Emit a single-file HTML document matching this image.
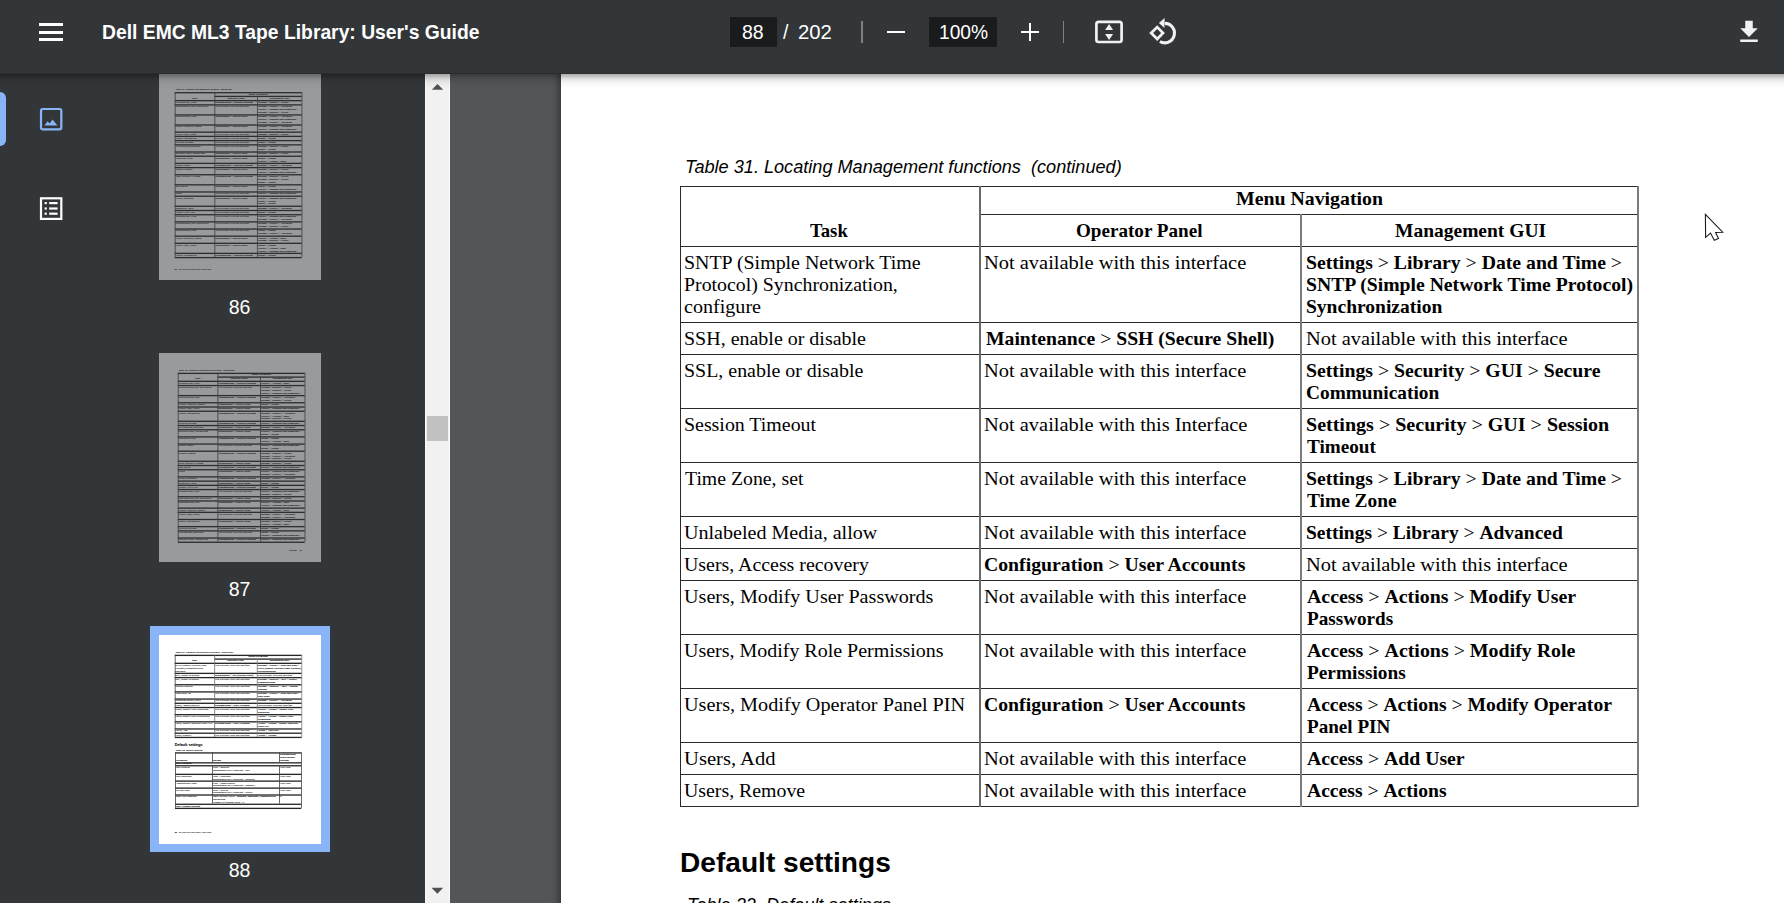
<!DOCTYPE html>
<html><head><meta charset="utf-8">
<style>
html,body{margin:0;padding:0;}
body{width:1784px;height:903px;overflow:hidden;position:relative;background:#525659;}
.t{position:absolute;white-space:nowrap;transform-origin:0 0;color:#000;line-height:normal;}
.hl{position:absolute;height:1px;background:#2a2a2a;}
.vl{position:absolute;width:1px;background:#2a2a2a;}
#toolbar{position:absolute;left:0;top:0;width:1784px;height:74px;background:#323639;z-index:10;}
#tbshadow{position:absolute;left:0;top:74px;width:1784px;height:17px;z-index:9;background:linear-gradient(to bottom, rgba(0,0,0,0.31) 0px, rgba(0,0,0,0.29) 1px, rgba(0,0,0,0.2) 3px, rgba(0,0,0,0.11) 5px, rgba(0,0,0,0.05) 8px, rgba(0,0,0,0.016) 12px, rgba(0,0,0,0) 16px);}
.th .hl{height:10px !important;background:#262626;}
.th .vl{width:6px !important;background:#404040;}
.th .t{-webkit-text-stroke:0.5px #333;}
#sidebar{position:absolute;left:0;top:74px;width:425px;height:829px;background:#323639;overflow:hidden;}
#scroll{position:absolute;left:425px;top:74px;width:25px;height:829px;background:#f1f1f1;}
#page{position:absolute;left:561px;top:37px;width:1224px;height:1584px;background:#fff;box-shadow:-3px 0 6px rgba(0,0,0,0.35);}
.tb{position:absolute;color:#fff;font-family:'Liberation Sans', sans-serif;white-space:nowrap;}
</style></head><body>
<div id="page">
<div class="t" style="left:123.93px;top:119.86px;font:17.5px 'Liberation Sans', sans-serif;transform:scaleX(1.0358);font-style:italic;">Table 31. Locating Management functions  (continued)</div>
<div class='hl' style='left:118.5px;top:148.5px;width:959.0px'></div>
<div class='hl' style='left:418.5px;top:176.5px;width:659.0px'></div>
<div class='hl' style='left:118.5px;top:208.5px;width:959.0px'></div>
<div class='hl' style='left:118.5px;top:284.5px;width:959.0px'></div>
<div class='hl' style='left:118.5px;top:316.5px;width:959.0px'></div>
<div class='hl' style='left:118.5px;top:370.5px;width:959.0px'></div>
<div class='hl' style='left:118.5px;top:424.5px;width:959.0px'></div>
<div class='hl' style='left:118.5px;top:478.5px;width:959.0px'></div>
<div class='hl' style='left:118.5px;top:510.5px;width:959.0px'></div>
<div class='hl' style='left:118.5px;top:542.5px;width:959.0px'></div>
<div class='hl' style='left:118.5px;top:596.5px;width:959.0px'></div>
<div class='hl' style='left:118.5px;top:650.5px;width:959.0px'></div>
<div class='hl' style='left:118.5px;top:704.5px;width:959.0px'></div>
<div class='hl' style='left:118.5px;top:736.5px;width:959.0px'></div>
<div class='hl' style='left:118.5px;top:768.5px;width:959.0px'></div>
<div class='vl' style='left:118.5px;top:148.5px;height:621.0px'></div>
<div class='vl' style='left:1076px;top:148.5px;height:621.0px;width:2px;background:#7c7c7c'></div>
<div class='vl' style='left:418px;top:148.5px;height:621.0px;width:2px;background:#6a6a6a'></div>
<div class='vl' style='left:739px;top:176.5px;height:593.0px;width:2px;background:#7c7c7c'></div>
<div class="t" style="left:675.18px;top:151.27px;font:19px 'Liberation Serif', serif;transform:scaleX(1.0429);"><b>Menu Navigation</b></div>
<div class="t" style="left:249.21px;top:182.87px;font:19px 'Liberation Serif', serif;transform:scaleX(0.9842);"><b>Task</b></div>
<div class="t" style="left:515.39px;top:182.87px;font:19px 'Liberation Serif', serif;transform:scaleX(1.0056);"><b>Operator Panel</b></div>
<div class="t" style="left:833.99px;top:182.87px;font:19px 'Liberation Serif', serif;transform:scaleX(1.0260);"><b>Management GUI</b></div>
<div class="t" style="left:122.95px;top:214.67px;font:19px 'Liberation Serif', serif;transform:scaleX(1.0478);">SNTP (Simple Network Time</div>
<div class="t" style="left:122.96px;top:236.67px;font:19px 'Liberation Serif', serif;transform:scaleX(1.0443);">Protocol) Synchronization,</div>
<div class="t" style="left:122.94px;top:258.67px;font:19px 'Liberation Serif', serif;transform:scaleX(1.0577);">configure</div>
<div class="t" style="left:423.42px;top:214.67px;font:19px 'Liberation Serif', serif;transform:scaleX(1.0760);">Not available with this interface</div>
<div class="t" style="left:745.36px;top:214.67px;font:19px 'Liberation Serif', serif;transform:scaleX(1.0381);"><b>Settings</b> &gt; <b>Library</b> &gt; <b>Date and Time</b> &gt;</div>
<div class="t" style="left:745.36px;top:236.67px;font:19px 'Liberation Serif', serif;transform:scaleX(1.0363);"><b>SNTP (Simple Network Time Protocol)</b></div>
<div class="t" style="left:745.37px;top:258.67px;font:19px 'Liberation Serif', serif;transform:scaleX(1.0275);"><b>Synchronization</b></div>
<div class="t" style="left:122.95px;top:290.67px;font:19px 'Liberation Serif', serif;transform:scaleX(1.0512);">SSH, enable or disable</div>
<div class="t" style="left:424.50px;top:290.67px;font:19px 'Liberation Serif', serif;transform:scaleX(1.0353);"><b>Maintenance</b> &gt; <b>SSH (Secure Shell)</b></div>
<div class="t" style="left:745.33px;top:290.67px;font:19px 'Liberation Serif', serif;transform:scaleX(1.0727);">Not available with this interface</div>
<div class="t" style="left:122.95px;top:322.67px;font:19px 'Liberation Serif', serif;transform:scaleX(1.0485);">SSL, enable or disable</div>
<div class="t" style="left:423.42px;top:322.67px;font:19px 'Liberation Serif', serif;transform:scaleX(1.0760);">Not available with this interface</div>
<div class="t" style="left:745.36px;top:322.67px;font:19px 'Liberation Serif', serif;transform:scaleX(1.0404);"><b>Settings</b> &gt; <b>Security</b> &gt; <b>GUI</b> &gt; <b>Secure</b></div>
<div class="t" style="left:745.38px;top:344.67px;font:19px 'Liberation Serif', serif;transform:scaleX(1.0178);"><b>Communication</b></div>
<div class="t" style="left:122.95px;top:376.67px;font:19px 'Liberation Serif', serif;transform:scaleX(1.0464);">Session Timeout</div>
<div class="t" style="left:423.42px;top:376.67px;font:19px 'Liberation Serif', serif;transform:scaleX(1.0761);">Not available with this Interface</div>
<div class="t" style="left:745.35px;top:376.67px;font:19px 'Liberation Serif', serif;transform:scaleX(1.0542);"><b>Settings</b> &gt; <b>Security</b> &gt; <b>GUI</b> &gt; <b>Session</b></div>
<div class="t" style="left:746.40px;top:398.67px;font:19px 'Liberation Serif', serif;transform:scaleX(1.0074);"><b>Timeout</b></div>
<div class="t" style="left:124.00px;top:430.67px;font:19px 'Liberation Serif', serif;transform:scaleX(1.0404);">Time Zone, set</div>
<div class="t" style="left:423.42px;top:430.67px;font:19px 'Liberation Serif', serif;transform:scaleX(1.0760);">Not available with this interface</div>
<div class="t" style="left:745.36px;top:430.67px;font:19px 'Liberation Serif', serif;transform:scaleX(1.0381);"><b>Settings</b> &gt; <b>Library</b> &gt; <b>Date and Time</b> &gt;</div>
<div class="t" style="left:746.40px;top:452.67px;font:19px 'Liberation Serif', serif;transform:scaleX(1.0207);"><b>Time Zone</b></div>
<div class="t" style="left:122.94px;top:484.67px;font:19px 'Liberation Serif', serif;transform:scaleX(1.0555);">Unlabeled Media, allow</div>
<div class="t" style="left:423.42px;top:484.67px;font:19px 'Liberation Serif', serif;transform:scaleX(1.0760);">Not available with this interface</div>
<div class="t" style="left:745.38px;top:484.67px;font:19px 'Liberation Serif', serif;transform:scaleX(1.0249);"><b>Settings</b> &gt; <b>Library</b> &gt; <b>Advanced</b></div>
<div class="t" style="left:122.95px;top:516.67px;font:19px 'Liberation Serif', serif;transform:scaleX(1.0457);">Users, Access recovery</div>
<div class="t" style="left:423.46px;top:516.67px;font:19px 'Liberation Serif', serif;transform:scaleX(1.0388);"><b>Configuration</b> &gt; <b>User Accounts</b></div>
<div class="t" style="left:745.33px;top:516.67px;font:19px 'Liberation Serif', serif;transform:scaleX(1.0731);">Not available with this interface</div>
<div class="t" style="left:122.94px;top:548.67px;font:19px 'Liberation Serif', serif;transform:scaleX(1.0598);">Users, Modify User Passwords</div>
<div class="t" style="left:423.42px;top:548.67px;font:19px 'Liberation Serif', serif;transform:scaleX(1.0760);">Not available with this interface</div>
<div class="t" style="left:746.40px;top:548.67px;font:19px 'Liberation Serif', serif;transform:scaleX(1.0455);"><b>Access</b> &gt; <b>Actions</b> &gt; <b>Modify User</b></div>
<div class="t" style="left:746.40px;top:570.67px;font:19px 'Liberation Serif', serif;transform:scaleX(1.0082);"><b>Passwords</b></div>
<div class="t" style="left:122.95px;top:602.67px;font:19px 'Liberation Serif', serif;transform:scaleX(1.0510);">Users, Modify Role Permissions</div>
<div class="t" style="left:423.42px;top:602.67px;font:19px 'Liberation Serif', serif;transform:scaleX(1.0760);">Not available with this interface</div>
<div class="t" style="left:746.40px;top:602.67px;font:19px 'Liberation Serif', serif;transform:scaleX(1.0473);"><b>Access</b> &gt; <b>Actions</b> &gt; <b>Modify Role</b></div>
<div class="t" style="left:746.40px;top:624.67px;font:19px 'Liberation Serif', serif;transform:scaleX(1.0165);"><b>Permissions</b></div>
<div class="t" style="left:122.94px;top:656.67px;font:19px 'Liberation Serif', serif;transform:scaleX(1.0635);">Users, Modify Operator Panel PIN</div>
<div class="t" style="left:423.46px;top:656.67px;font:19px 'Liberation Serif', serif;transform:scaleX(1.0388);"><b>Configuration</b> &gt; <b>User Accounts</b></div>
<div class="t" style="left:746.40px;top:656.67px;font:19px 'Liberation Serif', serif;transform:scaleX(1.0325);"><b>Access</b> &gt; <b>Actions</b> &gt; <b>Modify Operator</b></div>
<div class="t" style="left:746.40px;top:678.67px;font:19px 'Liberation Serif', serif;transform:scaleX(1.0060);"><b>Panel PIN</b></div>
<div class="t" style="left:122.92px;top:710.67px;font:19px 'Liberation Serif', serif;transform:scaleX(1.0843);">Users, Add</div>
<div class="t" style="left:423.42px;top:710.67px;font:19px 'Liberation Serif', serif;transform:scaleX(1.0760);">Not available with this interface</div>
<div class="t" style="left:746.40px;top:710.67px;font:19px 'Liberation Serif', serif;transform:scaleX(1.0397);"><b>Access</b> &gt; <b>Add User</b></div>
<div class="t" style="left:122.96px;top:742.67px;font:19px 'Liberation Serif', serif;transform:scaleX(1.0435);">Users, Remove</div>
<div class="t" style="left:423.42px;top:742.67px;font:19px 'Liberation Serif', serif;transform:scaleX(1.0760);">Not available with this interface</div>
<div class="t" style="left:746.40px;top:742.67px;font:19px 'Liberation Serif', serif;transform:scaleX(1.0319);"><b>Access</b> &gt; <b>Actions</b></div>
<div class="t" style="left:118.56px;top:810.41px;font:bold 27.5px 'Liberation Sans', sans-serif;transform:scaleX(1.0221);">Default settings</div>
<div class="t" style="left:126.00px;top:857.66px;font:17.5px 'Liberation Sans', sans-serif;transform:scaleX(1.0360);font-style:italic;">Table 32. Default settings</div>
<div class='hl' style='left:121px;top:886px;width:954px'></div>
<div class='hl' style='left:121px;top:961px;width:954px'></div>
<div class='hl' style='left:121px;top:983px;width:954px'></div>
<div class='hl' style='left:121px;top:1048px;width:954px'></div>
<div class='hl' style='left:121px;top:1099px;width:954px'></div>
<div class='hl' style='left:121px;top:1152px;width:954px'></div>
<div class='hl' style='left:121px;top:1204px;width:954px'></div>
<div class='hl' style='left:121px;top:1274px;width:954px'></div>
<div class='hl' style='left:121px;top:1305px;width:954px'></div>
<div class='vl' style='left:121px;top:886px;height:420px'></div>
<div class='vl' style='left:1074px;top:886px;height:420px'></div>
<div class='vl' style='left:402px;top:886px;height:75px'></div>
<div class='vl' style='left:402px;top:983px;height:291px'></div>
<div class='vl' style='left:908px;top:886px;height:75px'></div>
<div class='vl' style='left:908px;top:983px;height:291px'></div>
<div class="t" style="left:126.00px;top:936.07px;font:19px 'Liberation Serif', serif;transform:scaleX(1.0300);"><b>Parameter</b></div>
<div class="t" style="left:408.00px;top:936.07px;font:19px 'Liberation Serif', serif;transform:scaleX(1.0300);"><b>Default</b></div>
<div class="t" style="left:914.00px;top:892.07px;font:19px 'Liberation Serif', serif;transform:scaleX(1.0300);"><b>Configuration</b></div>
<div class="t" style="left:914.00px;top:914.07px;font:19px 'Liberation Serif', serif;transform:scaleX(1.0300);"><b>Reset Default</b></div>
<div class="t" style="left:914.00px;top:936.07px;font:19px 'Liberation Serif', serif;transform:scaleX(1.0300);"><b>Settings</b></div>
<div class="t" style="left:126.00px;top:959.07px;font:19px 'Liberation Serif', serif;transform:scaleX(1.0300);"><b>User Accounts</b></div>
<div class="t" style="left:126.00px;top:988.67px;font:19px 'Liberation Serif', serif;transform:scaleX(1.0500);">User Monitor</div>
<div class="t" style="left:408.00px;top:988.67px;font:19px 'Liberation Serif', serif;transform:scaleX(1.0500);">User = monitor</div>
<div class="t" style="left:408.00px;top:1010.67px;font:19px 'Liberation Serif', serif;transform:scaleX(1.0500);">Management GUI Password = null</div>
<div class="t" style="left:914.00px;top:988.67px;font:19px 'Liberation Serif', serif;transform:scaleX(1.0500);">NOT reset</div>
<div class="t" style="left:126.00px;top:1053.67px;font:19px 'Liberation Serif', serif;transform:scaleX(1.0500);">User Superuser</div>
<div class="t" style="left:408.00px;top:1053.67px;font:19px 'Liberation Serif', serif;transform:scaleX(1.0500);">User = superuser</div>
<div class="t" style="left:408.00px;top:1075.67px;font:19px 'Liberation Serif', serif;transform:scaleX(1.0500);">Management GUI Password = surpswd</div>
<div class="t" style="left:914.00px;top:1053.67px;font:19px 'Liberation Serif', serif;transform:scaleX(1.0500);">NOT reset</div>
<div class="t" style="left:126.00px;top:1104.67px;font:19px 'Liberation Serif', serif;transform:scaleX(1.0500);">Administrator login</div>
<div class="t" style="left:408.00px;top:1104.67px;font:19px 'Liberation Serif', serif;transform:scaleX(1.0500);">User = administrator</div>
<div class="t" style="left:408.00px;top:1126.67px;font:19px 'Liberation Serif', serif;transform:scaleX(1.0500);">Management GUI Password = admin01</div>
<div class="t" style="left:914.00px;top:1104.67px;font:19px 'Liberation Serif', serif;transform:scaleX(1.0500);">NOT reset</div>
<div class="t" style="left:126.00px;top:1157.67px;font:19px 'Liberation Serif', serif;transform:scaleX(1.0500);">Service login</div>
<div class="t" style="left:408.00px;top:1157.67px;font:19px 'Liberation Serif', serif;transform:scaleX(1.0500);">User = service</div>
<div class="t" style="left:408.00px;top:1179.67px;font:19px 'Liberation Serif', serif;transform:scaleX(1.0500);">Management GUI Password = ser001</div>
<div class="t" style="left:914.00px;top:1157.67px;font:19px 'Liberation Serif', serif;transform:scaleX(1.0500);">NOT reset</div>
<div class="t" style="left:126.00px;top:1209.67px;font:19px 'Liberation Serif', serif;transform:scaleX(1.0500);">Small user accounts</div>
<div class="t" style="left:408.00px;top:1209.67px;font:19px 'Liberation Serif', serif;transform:scaleX(1.0500);">Small Default Users = <b>monitor</b>, <b>superuser</b>, <b>administrator</b>,</div>
<div class="t" style="left:408.00px;top:1231.67px;font:19px 'Liberation Serif', serif;transform:scaleX(1.0500);">and <b>service</b></div>
<div class="t" style="left:408.00px;top:1253.67px;font:19px 'Liberation Serif', serif;transform:scaleX(1.0500);">Number of Custom Users = 0</div>
<div class="t" style="left:914.00px;top:1209.67px;font:19px 'Liberation Serif', serif;transform:scaleX(1.0500);">0</div>
<div class="t" style="left:126.00px;top:1279.07px;font:19px 'Liberation Serif', serif;transform:scaleX(1.0300);"><b>User Account Settings</b></div>
</div>
<div id="sidebar">
  <div style="position:absolute;left:-6px;top:18px;width:12px;height:54px;border-radius:6px;background:#8ab4f8"></div>
  <svg style="position:absolute;left:35px;top:28px" width="32" height="32" viewBox="35 102 32 32">
    <rect x="41" y="109" width="20.3" height="20.3" rx="1.8" fill="none" stroke="#8ab4f8" stroke-width="2.2"/>
    <path d="M44.5 125.5 L47.6 121.2 L49.6 123.6 L52.6 119.4 L57.4 125.5 Z" fill="#8ab4f8"/>
  </svg>
  <svg style="position:absolute;left:35px;top:118px" width="32" height="32" viewBox="35 192 32 32">
    <rect x="41" y="198.3" width="20.3" height="20.6" fill="none" stroke="#fff" stroke-width="2.2"/>
    <rect x="44.6" y="202" width="2.2" height="2.2" fill="#fff"/>
    <rect x="44.6" y="207.4" width="2.2" height="2.2" fill="#fff"/>
    <rect x="44.6" y="212.6" width="2.2" height="2.2" fill="#fff"/>
    <rect x="49.2" y="202" width="8.4" height="2.2" fill="#fff"/>
    <rect x="49.2" y="207.4" width="8.4" height="2.2" fill="#fff"/>
    <rect x="49.2" y="212.6" width="8.4" height="2.2" fill="#fff"/>
  </svg>
<div class='th' style='position:absolute;left:159px;top:-3px;width:162px;height:209px;overflow:hidden;background:#fff'><div style='position:absolute;left:0;top:0;width:1224px;height:1584px;transform:scale(0.132353);transform-origin:0 0'><div style='position:absolute;left:0;top:10px;width:1224px;height:1584px'><div class="t" style="left:126.00px;top:119.86px;font:17.5px 'Liberation Sans', sans-serif;transform:scaleX(1.0000);font-style:italic;">Table 31. Locating Management functions  (continued)</div>
<div class='hl' style='left:119px;top:149px;width:959px;height:2px'></div>
<div class='hl' style='left:419px;top:177px;width:659px;height:2px'></div>
<div class="t" style="left:676.00px;top:151.07px;font:19px 'Liberation Serif', serif;transform:scaleX(1.0300);"><b>Menu Navigation</b></div>
<div class="t" style="left:250.00px;top:183.07px;font:19px 'Liberation Serif', serif;transform:scaleX(1.0300);"><b>Task</b></div>
<div class="t" style="left:517.00px;top:183.07px;font:19px 'Liberation Serif', serif;transform:scaleX(1.0300);"><b>Operator Panel</b></div>
<div class="t" style="left:835.00px;top:183.07px;font:19px 'Liberation Serif', serif;transform:scaleX(1.0300);"><b>Management GUI</b></div>
<div class='hl' style='left:119px;top:209px;width:959px;height:2px'></div>
<div class="t" style="left:124.00px;top:214.67px;font:19px 'Liberation Serif', serif;transform:scaleX(1.0500);">Cleaning tape, eject</div>
<div class="t" style="left:425.00px;top:214.67px;font:19px 'Liberation Serif', serif;transform:scaleX(1.0300);"><b>Configuration</b> &gt; <b>Network Settings</b></div>
<div class="t" style="left:746.00px;top:214.67px;font:19px 'Liberation Serif', serif;transform:scaleX(1.0300);"><b>Settings</b> &gt; <b>Security</b> &gt; <b>SNMP</b></div>
<div class='hl' style='left:119px;top:241px;width:959px;height:2px'></div>
<div class="t" style="left:124.00px;top:246.67px;font:19px 'Liberation Serif', serif;transform:scaleX(1.0500);">Configuration, save and restore</div>
<div class="t" style="left:425.00px;top:246.67px;font:19px 'Liberation Serif', serif;transform:scaleX(1.0500);">Not available with this interface</div>
<div class="t" style="left:746.00px;top:246.67px;font:19px 'Liberation Serif', serif;transform:scaleX(1.0300);"><b>Settings</b> &gt; <b>Library</b> &gt; <b>Advanced</b></div>
<div class="t" style="left:746.00px;top:268.67px;font:19px 'Liberation Serif', serif;transform:scaleX(1.0300);"><b>Library</b> &gt; <b>Modules and Magazines</b> &gt;</div>
<div class="t" style="left:746.00px;top:290.67px;font:19px 'Liberation Serif', serif;transform:scaleX(1.0300);"><b>Settings</b> &gt; <b>Security</b> &gt; <b>SNMP</b></div>
<div class='hl' style='left:119px;top:317px;width:959px;height:2px'></div>
<div class="t" style="left:124.00px;top:322.67px;font:19px 'Liberation Serif', serif;transform:scaleX(1.0500);">Configuration, reset</div>
<div class="t" style="left:425.00px;top:322.67px;font:19px 'Liberation Serif', serif;transform:scaleX(1.0300);"><b>Maintenance</b> &gt; <b>Library Tests</b></div>
<div class="t" style="left:746.00px;top:322.67px;font:19px 'Liberation Serif', serif;transform:scaleX(1.0300);"><b>Settings</b> &gt; <b>Library</b> &gt; <b>Advanced</b></div>
<div class="t" style="left:746.00px;top:344.67px;font:19px 'Liberation Serif', serif;transform:scaleX(1.0300);"><b>Library</b> &gt; <b>Modules and Magazines</b> &gt;</div>
<div class="t" style="left:746.00px;top:366.67px;font:19px 'Liberation Serif', serif;transform:scaleX(1.0300);"><b>Settings</b> &gt; <b>Library</b> &gt; <b>Advanced</b></div>
<div class='hl' style='left:119px;top:393px;width:959px;height:2px'></div>
<div class="t" style="left:124.00px;top:398.67px;font:19px 'Liberation Serif', serif;transform:scaleX(1.0500);">Library firmware, update</div>
<div class="t" style="left:425.00px;top:398.67px;font:19px 'Liberation Serif', serif;transform:scaleX(1.0300);"><b>Maintenance</b> &gt; <b>Library Tests</b></div>
<div class="t" style="left:746.00px;top:398.67px;font:19px 'Liberation Serif', serif;transform:scaleX(1.0300);"><b>Settings</b> &gt; <b>Library</b> &gt; <b>Advanced</b></div>
<div class="t" style="left:746.00px;top:420.67px;font:19px 'Liberation Serif', serif;transform:scaleX(1.0300);"><b>Library</b> &gt; <b>Modules and Magazines</b> &gt;</div>
<div class='hl' style='left:119px;top:447px;width:959px;height:2px'></div>
<div class="t" style="left:124.00px;top:452.67px;font:19px 'Liberation Serif', serif;transform:scaleX(1.0500);">Library logs, export</div>
<div class="t" style="left:425.00px;top:452.67px;font:19px 'Liberation Serif', serif;transform:scaleX(1.0500);">Not available with this interface</div>
<div class="t" style="left:746.00px;top:452.67px;font:19px 'Liberation Serif', serif;transform:scaleX(1.0300);"><b>Settings</b> &gt; <b>Security</b> &gt; <b>SNMP</b></div>
<div class='hl' style='left:119px;top:479px;width:959px;height:2px'></div>
<div class="t" style="left:124.00px;top:484.67px;font:19px 'Liberation Serif', serif;transform:scaleX(1.0500);">Library Information</div>
<div class="t" style="left:425.00px;top:484.67px;font:19px 'Liberation Serif', serif;transform:scaleX(1.0500);">Not available with this interface</div>
<div class="t" style="left:746.00px;top:484.67px;font:19px 'Liberation Serif', serif;transform:scaleX(1.0300);"><b>Status</b> &gt; <b>Actions</b></div>
<div class='hl' style='left:119px;top:511px;width:959px;height:2px'></div>
<div class="t" style="left:124.00px;top:516.67px;font:19px 'Liberation Serif', serif;transform:scaleX(1.0500);">Network settings</div>
<div class="t" style="left:425.00px;top:516.67px;font:19px 'Liberation Serif', serif;transform:scaleX(1.0500);">Not available with this interface</div>
<div class="t" style="left:746.00px;top:516.67px;font:19px 'Liberation Serif', serif;transform:scaleX(1.0300);"><b>Status</b> &gt; <b>Actions</b></div>
<div class='hl' style='left:119px;top:543px;width:959px;height:2px'></div>
<div class="t" style="left:124.00px;top:548.67px;font:19px 'Liberation Serif', serif;transform:scaleX(1.0500);">Notifications, configure</div>
<div class="t" style="left:425.00px;top:548.67px;font:19px 'Liberation Serif', serif;transform:scaleX(1.0500);">Not available with this interface</div>
<div class="t" style="left:746.00px;top:548.67px;font:19px 'Liberation Serif', serif;transform:scaleX(1.0300);"><b>Settings</b> &gt; <b>Security</b> &gt; <b>SNMP</b></div>
<div class="t" style="left:746.00px;top:570.67px;font:19px 'Liberation Serif', serif;transform:scaleX(1.0300);"><b>Status</b> &gt; <b>Actions</b></div>
<div class='hl' style='left:119px;top:597px;width:959px;height:2px'></div>
<div class="t" style="left:124.00px;top:602.67px;font:19px 'Liberation Serif', serif;transform:scaleX(1.0500);">Operator Panel, unlock/lock</div>
<div class="t" style="left:425.00px;top:602.67px;font:19px 'Liberation Serif', serif;transform:scaleX(1.0300);"><b>Maintenance</b> &gt; <b>Library Tests</b></div>
<div class="t" style="left:746.00px;top:602.67px;font:19px 'Liberation Serif', serif;transform:scaleX(1.0300);"><b>Settings</b> &gt; <b>Security</b> &gt; <b>SNMP</b></div>
<div class='hl' style='left:119px;top:629px;width:959px;height:2px'></div>
<div class="t" style="left:124.00px;top:634.67px;font:19px 'Liberation Serif', serif;transform:scaleX(1.0500);">Password Policy</div>
<div class="t" style="left:425.00px;top:634.67px;font:19px 'Liberation Serif', serif;transform:scaleX(1.0300);"><b>Maintenance</b> &gt; <b>Library Tests</b></div>
<div class="t" style="left:746.00px;top:634.67px;font:19px 'Liberation Serif', serif;transform:scaleX(1.0300);"><b>Status</b> &gt; <b>Actions</b></div>
<div class="t" style="left:746.00px;top:656.67px;font:19px 'Liberation Serif', serif;transform:scaleX(1.0300);"><b>Library</b> &gt; <b>Actions</b> &gt; <b>Tests</b></div>
<div class='hl' style='left:119px;top:683px;width:959px;height:2px'></div>
<div class="t" style="left:124.00px;top:688.67px;font:19px 'Liberation Serif', serif;transform:scaleX(1.0500);">Reboot library</div>
<div class="t" style="left:425.00px;top:688.67px;font:19px 'Liberation Serif', serif;transform:scaleX(1.0300);"><b>Configuration</b> &gt; <b>Network Settings</b></div>
<div class="t" style="left:746.00px;top:688.67px;font:19px 'Liberation Serif', serif;transform:scaleX(1.0300);"><b>Settings</b> &gt; <b>Library</b> &gt; <b>Advanced</b></div>
<div class='hl' style='left:119px;top:715px;width:959px;height:2px'></div>
<div class="t" style="left:124.00px;top:720.67px;font:19px 'Liberation Serif', serif;transform:scaleX(1.0500);">Remote logging</div>
<div class="t" style="left:425.00px;top:720.67px;font:19px 'Liberation Serif', serif;transform:scaleX(1.0300);"><b>Maintenance</b> &gt; <b>Library Tests</b></div>
<div class="t" style="left:746.00px;top:720.67px;font:19px 'Liberation Serif', serif;transform:scaleX(1.0300);"><b>Settings</b> &gt; <b>Security</b> &gt; <b>SNMP</b></div>
<div class="t" style="left:746.00px;top:742.67px;font:19px 'Liberation Serif', serif;transform:scaleX(1.0300);"><b>Library</b> &gt; <b>Modules and Magazines</b> &gt;</div>
<div class='hl' style='left:119px;top:769px;width:959px;height:2px'></div>
<div class="t" style="left:124.00px;top:774.67px;font:19px 'Liberation Serif', serif;transform:scaleX(1.0500);">Reset Internal IP Range</div>
<div class="t" style="left:425.00px;top:774.67px;font:19px 'Liberation Serif', serif;transform:scaleX(1.0300);"><b>Configuration</b> &gt; <b>Network Settings</b></div>
<div class="t" style="left:746.00px;top:774.67px;font:19px 'Liberation Serif', serif;transform:scaleX(1.0300);"><b>Settings</b> &gt; <b>Security</b> &gt; <b>SNMP</b></div>
<div class="t" style="left:746.00px;top:796.67px;font:19px 'Liberation Serif', serif;transform:scaleX(1.0300);"><b>Settings</b> &gt; <b>Security</b> &gt; <b>SNMP</b></div>
<div class="t" style="left:746.00px;top:818.67px;font:19px 'Liberation Serif', serif;transform:scaleX(1.0300);"><b>Status</b> &gt; <b>Actions</b></div>
<div class='hl' style='left:119px;top:845px;width:959px;height:2px'></div>
<div class="t" style="left:124.00px;top:850.67px;font:19px 'Liberation Serif', serif;transform:scaleX(1.0500);">Shut Down</div>
<div class="t" style="left:425.00px;top:850.67px;font:19px 'Liberation Serif', serif;transform:scaleX(1.0300);"><b>Maintenance</b> &gt; <b>Library Tests</b></div>
<div class="t" style="left:746.00px;top:850.67px;font:19px 'Liberation Serif', serif;transform:scaleX(1.0300);"><b>Status</b> &gt; <b>Actions</b></div>
<div class="t" style="left:746.00px;top:872.67px;font:19px 'Liberation Serif', serif;transform:scaleX(1.0300);"><b>Library</b> &gt; <b>Modules and Magazines</b> &gt;</div>
<div class='hl' style='left:119px;top:899px;width:959px;height:2px'></div>
<div class="t" style="left:124.00px;top:904.67px;font:19px 'Liberation Serif', serif;transform:scaleX(1.0500);">Status</div>
<div class="t" style="left:425.00px;top:904.67px;font:19px 'Liberation Serif', serif;transform:scaleX(1.0500);">Not available with this interface</div>
<div class="t" style="left:746.00px;top:904.67px;font:19px 'Liberation Serif', serif;transform:scaleX(1.0300);"><b>Library</b> &gt; <b>Modules and Magazines</b> &gt;</div>
<div class='hl' style='left:119px;top:931px;width:959px;height:2px'></div>
<div class="t" style="left:124.00px;top:936.67px;font:19px 'Liberation Serif', serif;transform:scaleX(1.0500);">SNMP, configure</div>
<div class="t" style="left:425.00px;top:936.67px;font:19px 'Liberation Serif', serif;transform:scaleX(1.0300);"><b>Maintenance</b> &gt; <b>Library Tests</b></div>
<div class="t" style="left:746.00px;top:936.67px;font:19px 'Liberation Serif', serif;transform:scaleX(1.0300);"><b>Library</b> &gt; <b>Modules and Magazines</b> &gt;</div>
<div class="t" style="left:746.00px;top:958.67px;font:19px 'Liberation Serif', serif;transform:scaleX(1.0300);"><b>Status</b> &gt; <b>Actions</b></div>
<div class="t" style="left:746.00px;top:980.67px;font:19px 'Liberation Serif', serif;transform:scaleX(1.0300);"><b>Status</b> &gt; <b>Actions</b></div>
<div class='hl' style='left:119px;top:1007px;width:959px;height:2px'></div>
<div class="t" style="left:124.00px;top:1012.67px;font:19px 'Liberation Serif', serif;transform:scaleX(1.0500);">Magazines, open</div>
<div class="t" style="left:425.00px;top:1012.67px;font:19px 'Liberation Serif', serif;transform:scaleX(1.0500);">Not available with this interface</div>
<div class="t" style="left:746.00px;top:1012.67px;font:19px 'Liberation Serif', serif;transform:scaleX(1.0300);"><b>Settings</b> &gt; <b>Library</b> &gt; <b>Advanced</b></div>
<div class='hl' style='left:119px;top:1039px;width:959px;height:2px'></div>
<div class="t" style="left:124.00px;top:1044.67px;font:19px 'Liberation Serif', serif;transform:scaleX(1.0500);">Library Verify test</div>
<div class="t" style="left:425.00px;top:1044.67px;font:19px 'Liberation Serif', serif;transform:scaleX(1.0500);">Not available with this interface</div>
<div class="t" style="left:746.00px;top:1044.67px;font:19px 'Liberation Serif', serif;transform:scaleX(1.0300);"><b>Status</b> &gt; <b>Actions</b></div>
<div class='hl' style='left:119px;top:1071px;width:959px;height:2px'></div>
<div class="t" style="left:124.00px;top:1076.67px;font:19px 'Liberation Serif', serif;transform:scaleX(1.0500);">Cleaning tape, eject</div>
<div class="t" style="left:425.00px;top:1076.67px;font:19px 'Liberation Serif', serif;transform:scaleX(1.0500);">Not available with this interface</div>
<div class="t" style="left:746.00px;top:1076.67px;font:19px 'Liberation Serif', serif;transform:scaleX(1.0300);"><b>Library</b> &gt; <b>Modules and Magazines</b> &gt;</div>
<div class="t" style="left:746.00px;top:1098.67px;font:19px 'Liberation Serif', serif;transform:scaleX(1.0300);"><b>Settings</b> &gt; <b>Library</b> &gt; <b>Advanced</b></div>
<div class='hl' style='left:119px;top:1125px;width:959px;height:2px'></div>
<div class="t" style="left:124.00px;top:1130.67px;font:19px 'Liberation Serif', serif;transform:scaleX(1.0500);">Configuration, save and restore</div>
<div class="t" style="left:425.00px;top:1130.67px;font:19px 'Liberation Serif', serif;transform:scaleX(1.0500);">Not available with this interface</div>
<div class="t" style="left:746.00px;top:1130.67px;font:19px 'Liberation Serif', serif;transform:scaleX(1.0300);"><b>Settings</b> &gt; <b>Library</b> &gt; <b>Advanced</b></div>
<div class="t" style="left:746.00px;top:1152.67px;font:19px 'Liberation Serif', serif;transform:scaleX(1.0300);"><b>Settings</b> &gt; <b>Security</b> &gt; <b>SNMP</b></div>
<div class='hl' style='left:119px;top:1179px;width:959px;height:2px'></div>
<div class="t" style="left:124.00px;top:1184.67px;font:19px 'Liberation Serif', serif;transform:scaleX(1.0500);">Configuration, reset</div>
<div class="t" style="left:425.00px;top:1184.67px;font:19px 'Liberation Serif', serif;transform:scaleX(1.0500);">Not available with this interface</div>
<div class="t" style="left:746.00px;top:1184.67px;font:19px 'Liberation Serif', serif;transform:scaleX(1.0300);"><b>Status</b> &gt; <b>Actions</b></div>
<div class="t" style="left:746.00px;top:1206.67px;font:19px 'Liberation Serif', serif;transform:scaleX(1.0300);"><b>Settings</b> &gt; <b>Library</b> &gt; <b>Advanced</b></div>
<div class='hl' style='left:119px;top:1233px;width:959px;height:2px'></div>
<div class="t" style="left:124.00px;top:1238.67px;font:19px 'Liberation Serif', serif;transform:scaleX(1.0500);">Library firmware, update</div>
<div class="t" style="left:425.00px;top:1238.67px;font:19px 'Liberation Serif', serif;transform:scaleX(1.0300);"><b>Maintenance</b> &gt; <b>Library Tests</b></div>
<div class="t" style="left:746.00px;top:1238.67px;font:19px 'Liberation Serif', serif;transform:scaleX(1.0300);"><b>Library</b> &gt; <b>Actions</b> &gt; <b>Tests</b></div>
<div class="t" style="left:746.00px;top:1260.67px;font:19px 'Liberation Serif', serif;transform:scaleX(1.0300);"><b>Settings</b> &gt; <b>Security</b> &gt; <b>SNMP</b></div>
<div class='hl' style='left:119px;top:1287px;width:959px;height:2px'></div>
<div class="t" style="left:124.00px;top:1292.67px;font:19px 'Liberation Serif', serif;transform:scaleX(1.0500);">Library logs, export</div>
<div class="t" style="left:425.00px;top:1292.67px;font:19px 'Liberation Serif', serif;transform:scaleX(1.0300);"><b>Maintenance</b> &gt; <b>Library Tests</b></div>
<div class="t" style="left:746.00px;top:1292.67px;font:19px 'Liberation Serif', serif;transform:scaleX(1.0300);"><b>Status</b> &gt; <b>Actions</b></div>
<div class="t" style="left:746.00px;top:1314.67px;font:19px 'Liberation Serif', serif;transform:scaleX(1.0300);"><b>Library</b> &gt; <b>Actions</b> &gt; <b>Tests</b></div>
<div class="t" style="left:746.00px;top:1336.67px;font:19px 'Liberation Serif', serif;transform:scaleX(1.0300);"><b>Library</b> &gt; <b>Modules and Magazines</b> &gt;</div>
<div class='hl' style='left:119px;top:1363px;width:959px;height:2px'></div>
<div class="t" style="left:124.00px;top:1368.67px;font:19px 'Liberation Serif', serif;transform:scaleX(1.0500);">Library Information</div>
<div class="t" style="left:425.00px;top:1368.67px;font:19px 'Liberation Serif', serif;transform:scaleX(1.0300);"><b>Configuration</b> &gt; <b>Network Settings</b></div>
<div class="t" style="left:746.00px;top:1368.67px;font:19px 'Liberation Serif', serif;transform:scaleX(1.0300);"><b>Status</b> &gt; <b>Actions</b></div>
<div class='hl' style='left:119px;top:1395px;width:959px;height:2px'></div>
<div class='vl' style='left:119px;top:149px;height:1246px'></div>
<div class='vl' style='left:1077px;top:149px;height:1246px'></div>
<div class='vl' style='left:419px;top:149px;height:1246px'></div>
<div class='vl' style='left:740px;top:177px;height:1218px'></div>
<div class="t" style="left:119.00px;top:1483.33px;font:14px 'Liberation Sans', sans-serif;transform:scaleX(1.0000);"><b>86</b></div><div class="t" style="left:150.00px;top:1483.53px;font:14px 'Liberation Serif', serif;transform:scaleX(1.0000);">Dell EMC ML3 Tape Library: User's Guide</div></div></div><div style='position:absolute;left:0;top:0;width:162px;height:209px;background:rgba(50,54,57,0.5)'></div></div>
<div class='tb' style='left:228.5px;top:222.15px;width:22px;text-align:center;font-size:19.5px'>86</div>
<div class='th' style='position:absolute;left:159px;top:279px;width:162px;height:209px;overflow:hidden;background:#fff'><div style='position:absolute;left:0;top:0;width:1224px;height:1584px;transform:scale(0.132353);transform-origin:0 0'><div style='position:absolute;left:23px;top:0;width:1224px;height:1584px'><div class="t" style="left:126.00px;top:119.86px;font:17.5px 'Liberation Sans', sans-serif;transform:scaleX(1.0000);font-style:italic;">Table 31. Locating Management functions  (continued)</div>
<div class='hl' style='left:119px;top:149px;width:959px;height:2px'></div>
<div class='hl' style='left:419px;top:177px;width:659px;height:2px'></div>
<div class="t" style="left:676.00px;top:151.07px;font:19px 'Liberation Serif', serif;transform:scaleX(1.0300);"><b>Menu Navigation</b></div>
<div class="t" style="left:250.00px;top:183.07px;font:19px 'Liberation Serif', serif;transform:scaleX(1.0300);"><b>Task</b></div>
<div class="t" style="left:517.00px;top:183.07px;font:19px 'Liberation Serif', serif;transform:scaleX(1.0300);"><b>Operator Panel</b></div>
<div class="t" style="left:835.00px;top:183.07px;font:19px 'Liberation Serif', serif;transform:scaleX(1.0300);"><b>Management GUI</b></div>
<div class='hl' style='left:119px;top:209px;width:959px;height:2px'></div>
<div class="t" style="left:124.00px;top:214.67px;font:19px 'Liberation Serif', serif;transform:scaleX(1.0500);">Cleaning tape, eject</div>
<div class="t" style="left:425.00px;top:214.67px;font:19px 'Liberation Serif', serif;transform:scaleX(1.0300);"><b>Configuration</b> &gt; <b>Network Settings</b></div>
<div class="t" style="left:746.00px;top:214.67px;font:19px 'Liberation Serif', serif;transform:scaleX(1.0300);"><b>Library</b> &gt; <b>Actions</b> &gt; <b>Tests</b></div>
<div class='hl' style='left:119px;top:241px;width:959px;height:2px'></div>
<div class="t" style="left:124.00px;top:246.67px;font:19px 'Liberation Serif', serif;transform:scaleX(1.0500);">Configuration, save and restore</div>
<div class="t" style="left:425.00px;top:246.67px;font:19px 'Liberation Serif', serif;transform:scaleX(1.0500);">Not available with this interface</div>
<div class="t" style="left:746.00px;top:246.67px;font:19px 'Liberation Serif', serif;transform:scaleX(1.0300);"><b>Settings</b> &gt; <b>Security</b> &gt; <b>SNMP</b></div>
<div class="t" style="left:746.00px;top:268.67px;font:19px 'Liberation Serif', serif;transform:scaleX(1.0300);"><b>Settings</b> &gt; <b>Security</b> &gt; <b>SNMP</b></div>
<div class="t" style="left:746.00px;top:290.67px;font:19px 'Liberation Serif', serif;transform:scaleX(1.0300);"><b>Library</b> &gt; <b>Modules and Magazines</b> &gt;</div>
<div class='hl' style='left:119px;top:317px;width:959px;height:2px'></div>
<div class="t" style="left:124.00px;top:322.67px;font:19px 'Liberation Serif', serif;transform:scaleX(1.0500);">Configuration, reset</div>
<div class="t" style="left:425.00px;top:322.67px;font:19px 'Liberation Serif', serif;transform:scaleX(1.0300);"><b>Configuration</b> &gt; <b>Network Settings</b></div>
<div class="t" style="left:746.00px;top:322.67px;font:19px 'Liberation Serif', serif;transform:scaleX(1.0300);"><b>Settings</b> &gt; <b>Library</b> &gt; <b>Advanced</b></div>
<div class="t" style="left:746.00px;top:344.67px;font:19px 'Liberation Serif', serif;transform:scaleX(1.0300);"><b>Settings</b> &gt; <b>Security</b> &gt; <b>SNMP</b></div>
<div class='hl' style='left:119px;top:371px;width:959px;height:2px'></div>
<div class="t" style="left:124.00px;top:376.67px;font:19px 'Liberation Serif', serif;transform:scaleX(1.0500);">Library firmware, update</div>
<div class="t" style="left:425.00px;top:376.67px;font:19px 'Liberation Serif', serif;transform:scaleX(1.0300);"><b>Maintenance</b> &gt; <b>Library Tests</b></div>
<div class="t" style="left:746.00px;top:376.67px;font:19px 'Liberation Serif', serif;transform:scaleX(1.0300);"><b>Status</b> &gt; <b>Actions</b></div>
<div class='hl' style='left:119px;top:403px;width:959px;height:2px'></div>
<div class="t" style="left:124.00px;top:408.67px;font:19px 'Liberation Serif', serif;transform:scaleX(1.0500);">Library logs, export</div>
<div class="t" style="left:425.00px;top:408.67px;font:19px 'Liberation Serif', serif;transform:scaleX(1.0300);"><b>Maintenance</b> &gt; <b>Library Tests</b></div>
<div class="t" style="left:746.00px;top:408.67px;font:19px 'Liberation Serif', serif;transform:scaleX(1.0300);"><b>Library</b> &gt; <b>Modules and Magazines</b> &gt;</div>
<div class='hl' style='left:119px;top:435px;width:959px;height:2px'></div>
<div class="t" style="left:124.00px;top:440.67px;font:19px 'Liberation Serif', serif;transform:scaleX(1.0500);">Library Information</div>
<div class="t" style="left:425.00px;top:440.67px;font:19px 'Liberation Serif', serif;transform:scaleX(1.0300);"><b>Configuration</b> &gt; <b>Network Settings</b></div>
<div class="t" style="left:746.00px;top:440.67px;font:19px 'Liberation Serif', serif;transform:scaleX(1.0300);"><b>Settings</b> &gt; <b>Library</b> &gt; <b>Advanced</b></div>
<div class="t" style="left:746.00px;top:462.67px;font:19px 'Liberation Serif', serif;transform:scaleX(1.0300);"><b>Library</b> &gt; <b>Actions</b> &gt; <b>Tests</b></div>
<div class="t" style="left:746.00px;top:484.67px;font:19px 'Liberation Serif', serif;transform:scaleX(1.0300);"><b>Settings</b> &gt; <b>Security</b> &gt; <b>SNMP</b></div>
<div class='hl' style='left:119px;top:511px;width:959px;height:2px'></div>
<div class="t" style="left:124.00px;top:516.67px;font:19px 'Liberation Serif', serif;transform:scaleX(1.0500);">Network settings</div>
<div class="t" style="left:425.00px;top:516.67px;font:19px 'Liberation Serif', serif;transform:scaleX(1.0300);"><b>Configuration</b> &gt; <b>Network Settings</b></div>
<div class="t" style="left:746.00px;top:516.67px;font:19px 'Liberation Serif', serif;transform:scaleX(1.0300);"><b>Library</b> &gt; <b>Modules and Magazines</b> &gt;</div>
<div class='hl' style='left:119px;top:543px;width:959px;height:2px'></div>
<div class="t" style="left:124.00px;top:548.67px;font:19px 'Liberation Serif', serif;transform:scaleX(1.0500);">Notifications, configure</div>
<div class="t" style="left:425.00px;top:548.67px;font:19px 'Liberation Serif', serif;transform:scaleX(1.0300);"><b>Maintenance</b> &gt; <b>Library Tests</b></div>
<div class="t" style="left:746.00px;top:548.67px;font:19px 'Liberation Serif', serif;transform:scaleX(1.0300);"><b>Settings</b> &gt; <b>Library</b> &gt; <b>Advanced</b></div>
<div class='hl' style='left:119px;top:575px;width:959px;height:2px'></div>
<div class="t" style="left:124.00px;top:580.67px;font:19px 'Liberation Serif', serif;transform:scaleX(1.0500);">Operator Panel, unlock/lock</div>
<div class="t" style="left:425.00px;top:580.67px;font:19px 'Liberation Serif', serif;transform:scaleX(1.0300);"><b>Maintenance</b> &gt; <b>Library Tests</b></div>
<div class="t" style="left:746.00px;top:580.67px;font:19px 'Liberation Serif', serif;transform:scaleX(1.0300);"><b>Library</b> &gt; <b>Modules and Magazines</b> &gt;</div>
<div class="t" style="left:746.00px;top:602.67px;font:19px 'Liberation Serif', serif;transform:scaleX(1.0300);"><b>Status</b> &gt; <b>Actions</b></div>
<div class='hl' style='left:119px;top:629px;width:959px;height:2px'></div>
<div class="t" style="left:124.00px;top:634.67px;font:19px 'Liberation Serif', serif;transform:scaleX(1.0500);">Password Policy</div>
<div class="t" style="left:425.00px;top:634.67px;font:19px 'Liberation Serif', serif;transform:scaleX(1.0300);"><b>Configuration</b> &gt; <b>Network Settings</b></div>
<div class="t" style="left:746.00px;top:634.67px;font:19px 'Liberation Serif', serif;transform:scaleX(1.0300);"><b>Status</b> &gt; <b>Actions</b></div>
<div class="t" style="left:746.00px;top:656.67px;font:19px 'Liberation Serif', serif;transform:scaleX(1.0300);"><b>Library</b> &gt; <b>Actions</b> &gt; <b>Tests</b></div>
<div class='hl' style='left:119px;top:683px;width:959px;height:2px'></div>
<div class="t" style="left:124.00px;top:688.67px;font:19px 'Liberation Serif', serif;transform:scaleX(1.0500);">Reboot library</div>
<div class="t" style="left:425.00px;top:688.67px;font:19px 'Liberation Serif', serif;transform:scaleX(1.0500);">Not available with this interface</div>
<div class="t" style="left:746.00px;top:688.67px;font:19px 'Liberation Serif', serif;transform:scaleX(1.0300);"><b>Library</b> &gt; <b>Modules and Magazines</b> &gt;</div>
<div class="t" style="left:746.00px;top:710.67px;font:19px 'Liberation Serif', serif;transform:scaleX(1.0300);"><b>Status</b> &gt; <b>Actions</b></div>
<div class='hl' style='left:119px;top:737px;width:959px;height:2px'></div>
<div class="t" style="left:124.00px;top:742.67px;font:19px 'Liberation Serif', serif;transform:scaleX(1.0500);">Remote logging</div>
<div class="t" style="left:425.00px;top:742.67px;font:19px 'Liberation Serif', serif;transform:scaleX(1.0300);"><b>Configuration</b> &gt; <b>Network Settings</b></div>
<div class="t" style="left:746.00px;top:742.67px;font:19px 'Liberation Serif', serif;transform:scaleX(1.0300);"><b>Settings</b> &gt; <b>Security</b> &gt; <b>SNMP</b></div>
<div class="t" style="left:746.00px;top:764.67px;font:19px 'Liberation Serif', serif;transform:scaleX(1.0300);"><b>Settings</b> &gt; <b>Library</b> &gt; <b>Advanced</b></div>
<div class="t" style="left:746.00px;top:786.67px;font:19px 'Liberation Serif', serif;transform:scaleX(1.0300);"><b>Settings</b> &gt; <b>Security</b> &gt; <b>SNMP</b></div>
<div class='hl' style='left:119px;top:813px;width:959px;height:2px'></div>
<div class="t" style="left:124.00px;top:818.67px;font:19px 'Liberation Serif', serif;transform:scaleX(1.0500);">Reset Internal IP Range</div>
<div class="t" style="left:425.00px;top:818.67px;font:19px 'Liberation Serif', serif;transform:scaleX(1.0300);"><b>Maintenance</b> &gt; <b>Library Tests</b></div>
<div class="t" style="left:746.00px;top:818.67px;font:19px 'Liberation Serif', serif;transform:scaleX(1.0300);"><b>Settings</b> &gt; <b>Security</b> &gt; <b>SNMP</b></div>
<div class='hl' style='left:119px;top:845px;width:959px;height:2px'></div>
<div class="t" style="left:124.00px;top:850.67px;font:19px 'Liberation Serif', serif;transform:scaleX(1.0500);">Shut Down</div>
<div class="t" style="left:425.00px;top:850.67px;font:19px 'Liberation Serif', serif;transform:scaleX(1.0300);"><b>Configuration</b> &gt; <b>Network Settings</b></div>
<div class="t" style="left:746.00px;top:850.67px;font:19px 'Liberation Serif', serif;transform:scaleX(1.0300);"><b>Library</b> &gt; <b>Modules and Magazines</b> &gt;</div>
<div class='hl' style='left:119px;top:877px;width:959px;height:2px'></div>
<div class="t" style="left:124.00px;top:882.67px;font:19px 'Liberation Serif', serif;transform:scaleX(1.0500);">Status</div>
<div class="t" style="left:425.00px;top:882.67px;font:19px 'Liberation Serif', serif;transform:scaleX(1.0300);"><b>Maintenance</b> &gt; <b>Library Tests</b></div>
<div class="t" style="left:746.00px;top:882.67px;font:19px 'Liberation Serif', serif;transform:scaleX(1.0300);"><b>Library</b> &gt; <b>Modules and Magazines</b> &gt;</div>
<div class="t" style="left:746.00px;top:904.67px;font:19px 'Liberation Serif', serif;transform:scaleX(1.0300);"><b>Settings</b> &gt; <b>Library</b> &gt; <b>Advanced</b></div>
<div class='hl' style='left:119px;top:931px;width:959px;height:2px'></div>
<div class="t" style="left:124.00px;top:936.67px;font:19px 'Liberation Serif', serif;transform:scaleX(1.0500);">SNMP, configure</div>
<div class="t" style="left:425.00px;top:936.67px;font:19px 'Liberation Serif', serif;transform:scaleX(1.0300);"><b>Configuration</b> &gt; <b>Network Settings</b></div>
<div class="t" style="left:746.00px;top:936.67px;font:19px 'Liberation Serif', serif;transform:scaleX(1.0300);"><b>Settings</b> &gt; <b>Library</b> &gt; <b>Advanced</b></div>
<div class='hl' style='left:119px;top:963px;width:959px;height:2px'></div>
<div class="t" style="left:124.00px;top:968.67px;font:19px 'Liberation Serif', serif;transform:scaleX(1.0500);">Magazines, open</div>
<div class="t" style="left:425.00px;top:968.67px;font:19px 'Liberation Serif', serif;transform:scaleX(1.0300);"><b>Maintenance</b> &gt; <b>Library Tests</b></div>
<div class="t" style="left:746.00px;top:968.67px;font:19px 'Liberation Serif', serif;transform:scaleX(1.0300);"><b>Status</b> &gt; <b>Actions</b></div>
<div class='hl' style='left:119px;top:995px;width:959px;height:2px'></div>
<div class="t" style="left:124.00px;top:1000.67px;font:19px 'Liberation Serif', serif;transform:scaleX(1.0500);">Library Verify test</div>
<div class="t" style="left:425.00px;top:1000.67px;font:19px 'Liberation Serif', serif;transform:scaleX(1.0300);"><b>Configuration</b> &gt; <b>Network Settings</b></div>
<div class="t" style="left:746.00px;top:1000.67px;font:19px 'Liberation Serif', serif;transform:scaleX(1.0300);"><b>Status</b> &gt; <b>Actions</b></div>
<div class='hl' style='left:119px;top:1027px;width:959px;height:2px'></div>
<div class="t" style="left:124.00px;top:1032.67px;font:19px 'Liberation Serif', serif;transform:scaleX(1.0500);">Cleaning tape, eject</div>
<div class="t" style="left:425.00px;top:1032.67px;font:19px 'Liberation Serif', serif;transform:scaleX(1.0500);">Not available with this interface</div>
<div class="t" style="left:746.00px;top:1032.67px;font:19px 'Liberation Serif', serif;transform:scaleX(1.0300);"><b>Library</b> &gt; <b>Modules and Magazines</b> &gt;</div>
<div class="t" style="left:746.00px;top:1054.67px;font:19px 'Liberation Serif', serif;transform:scaleX(1.0300);"><b>Settings</b> &gt; <b>Security</b> &gt; <b>SNMP</b></div>
<div class='hl' style='left:119px;top:1081px;width:959px;height:2px'></div>
<div class="t" style="left:124.00px;top:1086.67px;font:19px 'Liberation Serif', serif;transform:scaleX(1.0500);">Configuration, save and restore</div>
<div class="t" style="left:425.00px;top:1086.67px;font:19px 'Liberation Serif', serif;transform:scaleX(1.0300);"><b>Maintenance</b> &gt; <b>Library Tests</b></div>
<div class="t" style="left:746.00px;top:1086.67px;font:19px 'Liberation Serif', serif;transform:scaleX(1.0300);"><b>Settings</b> &gt; <b>Security</b> &gt; <b>SNMP</b></div>
<div class='hl' style='left:119px;top:1113px;width:959px;height:2px'></div>
<div class="t" style="left:124.00px;top:1118.67px;font:19px 'Liberation Serif', serif;transform:scaleX(1.0500);">Configuration, reset</div>
<div class="t" style="left:425.00px;top:1118.67px;font:19px 'Liberation Serif', serif;transform:scaleX(1.0300);"><b>Maintenance</b> &gt; <b>Library Tests</b></div>
<div class="t" style="left:746.00px;top:1118.67px;font:19px 'Liberation Serif', serif;transform:scaleX(1.0300);"><b>Library</b> &gt; <b>Actions</b> &gt; <b>Tests</b></div>
<div class="t" style="left:746.00px;top:1140.67px;font:19px 'Liberation Serif', serif;transform:scaleX(1.0300);"><b>Library</b> &gt; <b>Modules and Magazines</b> &gt;</div>
<div class='hl' style='left:119px;top:1167px;width:959px;height:2px'></div>
<div class="t" style="left:124.00px;top:1172.67px;font:19px 'Liberation Serif', serif;transform:scaleX(1.0500);">Library firmware, update</div>
<div class="t" style="left:425.00px;top:1172.67px;font:19px 'Liberation Serif', serif;transform:scaleX(1.0300);"><b>Maintenance</b> &gt; <b>Library Tests</b></div>
<div class="t" style="left:746.00px;top:1172.67px;font:19px 'Liberation Serif', serif;transform:scaleX(1.0300);"><b>Library</b> &gt; <b>Actions</b> &gt; <b>Tests</b></div>
<div class='hl' style='left:119px;top:1199px;width:959px;height:2px'></div>
<div class="t" style="left:124.00px;top:1204.67px;font:19px 'Liberation Serif', serif;transform:scaleX(1.0500);">Library logs, export</div>
<div class="t" style="left:425.00px;top:1204.67px;font:19px 'Liberation Serif', serif;transform:scaleX(1.0500);">Not available with this interface</div>
<div class="t" style="left:746.00px;top:1204.67px;font:19px 'Liberation Serif', serif;transform:scaleX(1.0300);"><b>Settings</b> &gt; <b>Library</b> &gt; <b>Advanced</b></div>
<div class="t" style="left:746.00px;top:1226.67px;font:19px 'Liberation Serif', serif;transform:scaleX(1.0300);"><b>Settings</b> &gt; <b>Library</b> &gt; <b>Advanced</b></div>
<div class='hl' style='left:119px;top:1253px;width:959px;height:2px'></div>
<div class="t" style="left:124.00px;top:1258.67px;font:19px 'Liberation Serif', serif;transform:scaleX(1.0500);">Library Information</div>
<div class="t" style="left:425.00px;top:1258.67px;font:19px 'Liberation Serif', serif;transform:scaleX(1.0300);"><b>Maintenance</b> &gt; <b>Library Tests</b></div>
<div class="t" style="left:746.00px;top:1258.67px;font:19px 'Liberation Serif', serif;transform:scaleX(1.0300);"><b>Settings</b> &gt; <b>Security</b> &gt; <b>SNMP</b></div>
<div class="t" style="left:746.00px;top:1280.67px;font:19px 'Liberation Serif', serif;transform:scaleX(1.0300);"><b>Library</b> &gt; <b>Actions</b> &gt; <b>Tests</b></div>
<div class='hl' style='left:119px;top:1307px;width:959px;height:2px'></div>
<div class="t" style="left:124.00px;top:1312.67px;font:19px 'Liberation Serif', serif;transform:scaleX(1.0500);">Network settings</div>
<div class="t" style="left:425.00px;top:1312.67px;font:19px 'Liberation Serif', serif;transform:scaleX(1.0300);"><b>Configuration</b> &gt; <b>Network Settings</b></div>
<div class="t" style="left:746.00px;top:1312.67px;font:19px 'Liberation Serif', serif;transform:scaleX(1.0300);"><b>Status</b> &gt; <b>Actions</b></div>
<div class='hl' style='left:119px;top:1339px;width:959px;height:2px'></div>
<div class="t" style="left:124.00px;top:1344.67px;font:19px 'Liberation Serif', serif;transform:scaleX(1.0500);">Notifications, configure</div>
<div class="t" style="left:425.00px;top:1344.67px;font:19px 'Liberation Serif', serif;transform:scaleX(1.0500);">Not available with this interface</div>
<div class="t" style="left:746.00px;top:1344.67px;font:19px 'Liberation Serif', serif;transform:scaleX(1.0300);"><b>Status</b> &gt; <b>Actions</b></div>
<div class="t" style="left:746.00px;top:1366.67px;font:19px 'Liberation Serif', serif;transform:scaleX(1.0300);"><b>Library</b> &gt; <b>Modules and Magazines</b> &gt;</div>
<div class='hl' style='left:119px;top:1393px;width:959px;height:2px'></div>
<div class="t" style="left:124.00px;top:1398.67px;font:19px 'Liberation Serif', serif;transform:scaleX(1.0500);">Operator Panel, unlock/lock</div>
<div class="t" style="left:425.00px;top:1398.67px;font:19px 'Liberation Serif', serif;transform:scaleX(1.0300);"><b>Configuration</b> &gt; <b>Network Settings</b></div>
<div class="t" style="left:746.00px;top:1398.67px;font:19px 'Liberation Serif', serif;transform:scaleX(1.0300);"><b>Library</b> &gt; <b>Modules and Magazines</b> &gt;</div>
<div class='hl' style='left:119px;top:1425px;width:959px;height:2px'></div>
<div class='vl' style='left:119px;top:149px;height:1276px'></div>
<div class='vl' style='left:1077px;top:149px;height:1276px'></div>
<div class='vl' style='left:419px;top:149px;height:1276px'></div>
<div class='vl' style='left:740px;top:177px;height:1248px'></div>
<div class="t" style="left:960.00px;top:1483.53px;font:14px 'Liberation Serif', serif;transform:scaleX(1.0000);">Managing</div>
<div class="t" style="left:1040.00px;top:1483.33px;font:14px 'Liberation Sans', sans-serif;transform:scaleX(1.0000);"><b>87</b></div></div></div><div style='position:absolute;left:0;top:0;width:162px;height:209px;background:rgba(50,54,57,0.5)'></div></div>
<div class='tb' style='left:228.5px;top:504.15px;width:22px;text-align:center;font-size:19.5px'>87</div>
<div style='position:absolute;left:150px;top:552px;width:180px;height:226px;background:#8ab4f8'></div>
<div class='th' style='position:absolute;left:159px;top:561px;width:162px;height:209px;overflow:hidden;background:#fff'><div style='position:absolute;left:0;top:0;width:1224px;height:1584px;transform:scale(0.132353);transform-origin:0 0'><div class="t" style="left:123.93px;top:119.86px;font:17.5px 'Liberation Sans', sans-serif;transform:scaleX(1.0358);font-style:italic;">Table 31. Locating Management functions  (continued)</div>
<div class='hl' style='left:118.5px;top:148.5px;width:959.0px'></div>
<div class='hl' style='left:418.5px;top:176.5px;width:659.0px'></div>
<div class='hl' style='left:118.5px;top:208.5px;width:959.0px'></div>
<div class='hl' style='left:118.5px;top:284.5px;width:959.0px'></div>
<div class='hl' style='left:118.5px;top:316.5px;width:959.0px'></div>
<div class='hl' style='left:118.5px;top:370.5px;width:959.0px'></div>
<div class='hl' style='left:118.5px;top:424.5px;width:959.0px'></div>
<div class='hl' style='left:118.5px;top:478.5px;width:959.0px'></div>
<div class='hl' style='left:118.5px;top:510.5px;width:959.0px'></div>
<div class='hl' style='left:118.5px;top:542.5px;width:959.0px'></div>
<div class='hl' style='left:118.5px;top:596.5px;width:959.0px'></div>
<div class='hl' style='left:118.5px;top:650.5px;width:959.0px'></div>
<div class='hl' style='left:118.5px;top:704.5px;width:959.0px'></div>
<div class='hl' style='left:118.5px;top:736.5px;width:959.0px'></div>
<div class='hl' style='left:118.5px;top:768.5px;width:959.0px'></div>
<div class='vl' style='left:118.5px;top:148.5px;height:621.0px'></div>
<div class='vl' style='left:1076px;top:148.5px;height:621.0px;width:2px;background:#7c7c7c'></div>
<div class='vl' style='left:418px;top:148.5px;height:621.0px;width:2px;background:#6a6a6a'></div>
<div class='vl' style='left:739px;top:176.5px;height:593.0px;width:2px;background:#7c7c7c'></div>
<div class="t" style="left:675.18px;top:151.27px;font:19px 'Liberation Serif', serif;transform:scaleX(1.0429);"><b>Menu Navigation</b></div>
<div class="t" style="left:249.21px;top:182.87px;font:19px 'Liberation Serif', serif;transform:scaleX(0.9842);"><b>Task</b></div>
<div class="t" style="left:515.39px;top:182.87px;font:19px 'Liberation Serif', serif;transform:scaleX(1.0056);"><b>Operator Panel</b></div>
<div class="t" style="left:833.99px;top:182.87px;font:19px 'Liberation Serif', serif;transform:scaleX(1.0260);"><b>Management GUI</b></div>
<div class="t" style="left:122.95px;top:214.67px;font:19px 'Liberation Serif', serif;transform:scaleX(1.0478);">SNTP (Simple Network Time</div>
<div class="t" style="left:122.96px;top:236.67px;font:19px 'Liberation Serif', serif;transform:scaleX(1.0443);">Protocol) Synchronization,</div>
<div class="t" style="left:122.94px;top:258.67px;font:19px 'Liberation Serif', serif;transform:scaleX(1.0577);">configure</div>
<div class="t" style="left:423.42px;top:214.67px;font:19px 'Liberation Serif', serif;transform:scaleX(1.0760);">Not available with this interface</div>
<div class="t" style="left:745.36px;top:214.67px;font:19px 'Liberation Serif', serif;transform:scaleX(1.0381);"><b>Settings</b> &gt; <b>Library</b> &gt; <b>Date and Time</b> &gt;</div>
<div class="t" style="left:745.36px;top:236.67px;font:19px 'Liberation Serif', serif;transform:scaleX(1.0363);"><b>SNTP (Simple Network Time Protocol)</b></div>
<div class="t" style="left:745.37px;top:258.67px;font:19px 'Liberation Serif', serif;transform:scaleX(1.0275);"><b>Synchronization</b></div>
<div class="t" style="left:122.95px;top:290.67px;font:19px 'Liberation Serif', serif;transform:scaleX(1.0512);">SSH, enable or disable</div>
<div class="t" style="left:424.50px;top:290.67px;font:19px 'Liberation Serif', serif;transform:scaleX(1.0353);"><b>Maintenance</b> &gt; <b>SSH (Secure Shell)</b></div>
<div class="t" style="left:745.33px;top:290.67px;font:19px 'Liberation Serif', serif;transform:scaleX(1.0727);">Not available with this interface</div>
<div class="t" style="left:122.95px;top:322.67px;font:19px 'Liberation Serif', serif;transform:scaleX(1.0485);">SSL, enable or disable</div>
<div class="t" style="left:423.42px;top:322.67px;font:19px 'Liberation Serif', serif;transform:scaleX(1.0760);">Not available with this interface</div>
<div class="t" style="left:745.36px;top:322.67px;font:19px 'Liberation Serif', serif;transform:scaleX(1.0404);"><b>Settings</b> &gt; <b>Security</b> &gt; <b>GUI</b> &gt; <b>Secure</b></div>
<div class="t" style="left:745.38px;top:344.67px;font:19px 'Liberation Serif', serif;transform:scaleX(1.0178);"><b>Communication</b></div>
<div class="t" style="left:122.95px;top:376.67px;font:19px 'Liberation Serif', serif;transform:scaleX(1.0464);">Session Timeout</div>
<div class="t" style="left:423.42px;top:376.67px;font:19px 'Liberation Serif', serif;transform:scaleX(1.0761);">Not available with this Interface</div>
<div class="t" style="left:745.35px;top:376.67px;font:19px 'Liberation Serif', serif;transform:scaleX(1.0542);"><b>Settings</b> &gt; <b>Security</b> &gt; <b>GUI</b> &gt; <b>Session</b></div>
<div class="t" style="left:746.40px;top:398.67px;font:19px 'Liberation Serif', serif;transform:scaleX(1.0074);"><b>Timeout</b></div>
<div class="t" style="left:124.00px;top:430.67px;font:19px 'Liberation Serif', serif;transform:scaleX(1.0404);">Time Zone, set</div>
<div class="t" style="left:423.42px;top:430.67px;font:19px 'Liberation Serif', serif;transform:scaleX(1.0760);">Not available with this interface</div>
<div class="t" style="left:745.36px;top:430.67px;font:19px 'Liberation Serif', serif;transform:scaleX(1.0381);"><b>Settings</b> &gt; <b>Library</b> &gt; <b>Date and Time</b> &gt;</div>
<div class="t" style="left:746.40px;top:452.67px;font:19px 'Liberation Serif', serif;transform:scaleX(1.0207);"><b>Time Zone</b></div>
<div class="t" style="left:122.94px;top:484.67px;font:19px 'Liberation Serif', serif;transform:scaleX(1.0555);">Unlabeled Media, allow</div>
<div class="t" style="left:423.42px;top:484.67px;font:19px 'Liberation Serif', serif;transform:scaleX(1.0760);">Not available with this interface</div>
<div class="t" style="left:745.38px;top:484.67px;font:19px 'Liberation Serif', serif;transform:scaleX(1.0249);"><b>Settings</b> &gt; <b>Library</b> &gt; <b>Advanced</b></div>
<div class="t" style="left:122.95px;top:516.67px;font:19px 'Liberation Serif', serif;transform:scaleX(1.0457);">Users, Access recovery</div>
<div class="t" style="left:423.46px;top:516.67px;font:19px 'Liberation Serif', serif;transform:scaleX(1.0388);"><b>Configuration</b> &gt; <b>User Accounts</b></div>
<div class="t" style="left:745.33px;top:516.67px;font:19px 'Liberation Serif', serif;transform:scaleX(1.0731);">Not available with this interface</div>
<div class="t" style="left:122.94px;top:548.67px;font:19px 'Liberation Serif', serif;transform:scaleX(1.0598);">Users, Modify User Passwords</div>
<div class="t" style="left:423.42px;top:548.67px;font:19px 'Liberation Serif', serif;transform:scaleX(1.0760);">Not available with this interface</div>
<div class="t" style="left:746.40px;top:548.67px;font:19px 'Liberation Serif', serif;transform:scaleX(1.0455);"><b>Access</b> &gt; <b>Actions</b> &gt; <b>Modify User</b></div>
<div class="t" style="left:746.40px;top:570.67px;font:19px 'Liberation Serif', serif;transform:scaleX(1.0082);"><b>Passwords</b></div>
<div class="t" style="left:122.95px;top:602.67px;font:19px 'Liberation Serif', serif;transform:scaleX(1.0510);">Users, Modify Role Permissions</div>
<div class="t" style="left:423.42px;top:602.67px;font:19px 'Liberation Serif', serif;transform:scaleX(1.0760);">Not available with this interface</div>
<div class="t" style="left:746.40px;top:602.67px;font:19px 'Liberation Serif', serif;transform:scaleX(1.0473);"><b>Access</b> &gt; <b>Actions</b> &gt; <b>Modify Role</b></div>
<div class="t" style="left:746.40px;top:624.67px;font:19px 'Liberation Serif', serif;transform:scaleX(1.0165);"><b>Permissions</b></div>
<div class="t" style="left:122.94px;top:656.67px;font:19px 'Liberation Serif', serif;transform:scaleX(1.0635);">Users, Modify Operator Panel PIN</div>
<div class="t" style="left:423.46px;top:656.67px;font:19px 'Liberation Serif', serif;transform:scaleX(1.0388);"><b>Configuration</b> &gt; <b>User Accounts</b></div>
<div class="t" style="left:746.40px;top:656.67px;font:19px 'Liberation Serif', serif;transform:scaleX(1.0325);"><b>Access</b> &gt; <b>Actions</b> &gt; <b>Modify Operator</b></div>
<div class="t" style="left:746.40px;top:678.67px;font:19px 'Liberation Serif', serif;transform:scaleX(1.0060);"><b>Panel PIN</b></div>
<div class="t" style="left:122.92px;top:710.67px;font:19px 'Liberation Serif', serif;transform:scaleX(1.0843);">Users, Add</div>
<div class="t" style="left:423.42px;top:710.67px;font:19px 'Liberation Serif', serif;transform:scaleX(1.0760);">Not available with this interface</div>
<div class="t" style="left:746.40px;top:710.67px;font:19px 'Liberation Serif', serif;transform:scaleX(1.0397);"><b>Access</b> &gt; <b>Add User</b></div>
<div class="t" style="left:122.96px;top:742.67px;font:19px 'Liberation Serif', serif;transform:scaleX(1.0435);">Users, Remove</div>
<div class="t" style="left:423.42px;top:742.67px;font:19px 'Liberation Serif', serif;transform:scaleX(1.0760);">Not available with this interface</div>
<div class="t" style="left:746.40px;top:742.67px;font:19px 'Liberation Serif', serif;transform:scaleX(1.0319);"><b>Access</b> &gt; <b>Actions</b></div>
<div class="t" style="left:118.56px;top:810.41px;font:bold 27.5px 'Liberation Sans', sans-serif;transform:scaleX(1.0221);">Default settings</div>
<div class="t" style="left:126.00px;top:857.66px;font:17.5px 'Liberation Sans', sans-serif;transform:scaleX(1.0360);font-style:italic;">Table 32. Default settings</div>
<div class='hl' style='left:121px;top:886px;width:954px'></div>
<div class='hl' style='left:121px;top:961px;width:954px'></div>
<div class='hl' style='left:121px;top:983px;width:954px'></div>
<div class='hl' style='left:121px;top:1048px;width:954px'></div>
<div class='hl' style='left:121px;top:1099px;width:954px'></div>
<div class='hl' style='left:121px;top:1152px;width:954px'></div>
<div class='hl' style='left:121px;top:1204px;width:954px'></div>
<div class='hl' style='left:121px;top:1274px;width:954px'></div>
<div class='hl' style='left:121px;top:1305px;width:954px'></div>
<div class='vl' style='left:121px;top:886px;height:420px'></div>
<div class='vl' style='left:1074px;top:886px;height:420px'></div>
<div class='vl' style='left:402px;top:886px;height:75px'></div>
<div class='vl' style='left:402px;top:983px;height:291px'></div>
<div class='vl' style='left:908px;top:886px;height:75px'></div>
<div class='vl' style='left:908px;top:983px;height:291px'></div>
<div class="t" style="left:126.00px;top:936.07px;font:19px 'Liberation Serif', serif;transform:scaleX(1.0300);"><b>Parameter</b></div>
<div class="t" style="left:408.00px;top:936.07px;font:19px 'Liberation Serif', serif;transform:scaleX(1.0300);"><b>Default</b></div>
<div class="t" style="left:914.00px;top:892.07px;font:19px 'Liberation Serif', serif;transform:scaleX(1.0300);"><b>Configuration</b></div>
<div class="t" style="left:914.00px;top:914.07px;font:19px 'Liberation Serif', serif;transform:scaleX(1.0300);"><b>Reset Default</b></div>
<div class="t" style="left:914.00px;top:936.07px;font:19px 'Liberation Serif', serif;transform:scaleX(1.0300);"><b>Settings</b></div>
<div class="t" style="left:126.00px;top:959.07px;font:19px 'Liberation Serif', serif;transform:scaleX(1.0300);"><b>User Accounts</b></div>
<div class="t" style="left:126.00px;top:988.67px;font:19px 'Liberation Serif', serif;transform:scaleX(1.0500);">User Monitor</div>
<div class="t" style="left:408.00px;top:988.67px;font:19px 'Liberation Serif', serif;transform:scaleX(1.0500);">User = monitor</div>
<div class="t" style="left:408.00px;top:1010.67px;font:19px 'Liberation Serif', serif;transform:scaleX(1.0500);">Management GUI Password = null</div>
<div class="t" style="left:914.00px;top:988.67px;font:19px 'Liberation Serif', serif;transform:scaleX(1.0500);">NOT reset</div>
<div class="t" style="left:126.00px;top:1053.67px;font:19px 'Liberation Serif', serif;transform:scaleX(1.0500);">User Superuser</div>
<div class="t" style="left:408.00px;top:1053.67px;font:19px 'Liberation Serif', serif;transform:scaleX(1.0500);">User = superuser</div>
<div class="t" style="left:408.00px;top:1075.67px;font:19px 'Liberation Serif', serif;transform:scaleX(1.0500);">Management GUI Password = surpswd</div>
<div class="t" style="left:914.00px;top:1053.67px;font:19px 'Liberation Serif', serif;transform:scaleX(1.0500);">NOT reset</div>
<div class="t" style="left:126.00px;top:1104.67px;font:19px 'Liberation Serif', serif;transform:scaleX(1.0500);">Administrator login</div>
<div class="t" style="left:408.00px;top:1104.67px;font:19px 'Liberation Serif', serif;transform:scaleX(1.0500);">User = administrator</div>
<div class="t" style="left:408.00px;top:1126.67px;font:19px 'Liberation Serif', serif;transform:scaleX(1.0500);">Management GUI Password = admin01</div>
<div class="t" style="left:914.00px;top:1104.67px;font:19px 'Liberation Serif', serif;transform:scaleX(1.0500);">NOT reset</div>
<div class="t" style="left:126.00px;top:1157.67px;font:19px 'Liberation Serif', serif;transform:scaleX(1.0500);">Service login</div>
<div class="t" style="left:408.00px;top:1157.67px;font:19px 'Liberation Serif', serif;transform:scaleX(1.0500);">User = service</div>
<div class="t" style="left:408.00px;top:1179.67px;font:19px 'Liberation Serif', serif;transform:scaleX(1.0500);">Management GUI Password = ser001</div>
<div class="t" style="left:914.00px;top:1157.67px;font:19px 'Liberation Serif', serif;transform:scaleX(1.0500);">NOT reset</div>
<div class="t" style="left:126.00px;top:1209.67px;font:19px 'Liberation Serif', serif;transform:scaleX(1.0500);">Small user accounts</div>
<div class="t" style="left:408.00px;top:1209.67px;font:19px 'Liberation Serif', serif;transform:scaleX(1.0500);">Small Default Users = <b>monitor</b>, <b>superuser</b>, <b>administrator</b>,</div>
<div class="t" style="left:408.00px;top:1231.67px;font:19px 'Liberation Serif', serif;transform:scaleX(1.0500);">and <b>service</b></div>
<div class="t" style="left:408.00px;top:1253.67px;font:19px 'Liberation Serif', serif;transform:scaleX(1.0500);">Number of Custom Users = 0</div>
<div class="t" style="left:914.00px;top:1209.67px;font:19px 'Liberation Serif', serif;transform:scaleX(1.0500);">0</div>
<div class="t" style="left:126.00px;top:1279.07px;font:19px 'Liberation Serif', serif;transform:scaleX(1.0300);"><b>User Account Settings</b></div><div class="t" style="left:119.00px;top:1483.33px;font:14px 'Liberation Sans', sans-serif;transform:scaleX(1.0000);"><b>88</b></div><div class="t" style="left:150.00px;top:1483.53px;font:14px 'Liberation Serif', serif;transform:scaleX(1.0000);">Dell EMC ML3 Tape Library: User's Guide</div></div></div>
<div class='tb' style='left:228.5px;top:785.35px;width:22px;text-align:center;font-size:19.5px'>88</div>
</div>
<div id="scroll">
  <div style="position:absolute;left:0;top:0;width:1px;height:829px;background:#fafafa"></div>
  <div style="position:absolute;left:24px;top:0;width:1px;height:829px;background:#fafafa"></div>
  <svg style="position:absolute;left:0;top:0" width="25" height="25" viewBox="425 74 25 25"><path d="M437.5 84 L443.2 89.8 L431.8 89.8 Z" fill="#505050"/></svg>
  <div style="position:absolute;left:2px;top:342px;width:21px;height:25px;background:#c1c1c1"></div>
  <svg style="position:absolute;left:0;top:804px" width="25" height="25" viewBox="425 878 25 25"><path d="M431.5 887.8 L443.2 887.8 L437.4 893.8 Z" fill="#505050"/></svg>
</div>
<div id="tbshadow"></div>
<div id="toolbar">
  <div style="position:absolute;left:0;top:72.5px;width:1784px;height:1.5px;background:rgba(0,0,0,0.18)"></div>
  <div style="position:absolute;left:39px;top:23px;width:24px;height:3px;background:#fff"></div>
  <div style="position:absolute;left:39px;top:30.5px;width:24px;height:3px;background:#fff"></div>
  <div style="position:absolute;left:39px;top:38px;width:24px;height:3px;background:#fff"></div>
  <div class="tb" style="left:102px;top:20.08px;font-size:20.8px;font-weight:bold;transform:scaleX(0.928);transform-origin:0 0">Dell EMC ML3 Tape Library: User's Guide</div>
  <div style="position:absolute;left:730px;top:17px;width:47px;height:30px;background:#191b1c"></div>
  <div class="tb" style="left:742px;top:21.25px;font-size:19.5px">88</div>
  <div class="tb" style="left:783px;top:21.25px;font-size:19.5px">/</div>
  <div class="tb" style="left:797.5px;top:21.25px;font-size:19.5px;transform:scaleX(1.04);transform-origin:0 0">202</div>
  <div style="position:absolute;left:861px;top:21px;width:2px;height:22px;background:#7d8082"></div>
  <div style="position:absolute;left:887px;top:30.5px;width:18px;height:2.5px;background:#fff"></div>
  <div style="position:absolute;left:929px;top:17px;width:68px;height:30px;background:#191b1c"></div>
  <div class="tb" style="left:938.8px;top:21.35px;font-size:19.5px;transform:scaleX(0.985);transform-origin:0 0">100%</div>
  <div style="position:absolute;left:1021px;top:30.6px;width:18px;height:2.5px;background:#fff"></div>
  <div style="position:absolute;left:1028.8px;top:23px;width:2.5px;height:18px;background:#fff"></div>
  <div style="position:absolute;left:1063px;top:21px;width:1px;height:22px;background:#7d8082"></div>
  <svg style="position:absolute;left:1090px;top:15px" width="40" height="34" viewBox="1090 15 40 34">
    <rect x="1096.4" y="21.9" width="25.2" height="20.1" rx="2.2" ry="2.2" fill="none" stroke="#f1f1f1" stroke-width="2.7"/>
    <path d="M1109.1 24 L1113.1 29.9 L1105.1 29.9 Z" fill="#f1f1f1"/>
    <path d="M1105.1 34 L1113.1 34 L1109.1 40 Z" fill="#f1f1f1"/>
  </svg>
  <svg style="position:absolute;left:1140px;top:12px" width="42" height="40" viewBox="1140 12 42 40">
    <path d="M1157.2 25.2 L1164.9 33.1 L1157.2 40.9 L1149.2 33.1 Z M1157.2 29.1 L1153.1 33.1 L1157.2 37.1 L1161.1 33.1 Z" fill="#f1f1f1" fill-rule="evenodd"/>
    <path d="M1164.7 23.4 A9.7 9.7 0 1 1 1159.9 41.5" fill="none" stroke="#f1f1f1" stroke-width="3.1"/>
    <path d="M1158.9 23 L1164.6 18.1 L1164.4 28 Z" fill="#f1f1f1"/>
  </svg>
  <svg style="position:absolute;left:1734.15px;top:16.95px" width="30" height="30" viewBox="0 0 24 24">
    <path d="M19 9h-4V3H9v6H5l7 7 7-7zM5 18v2h14v-2H5z" fill="#f1f1f1"/>
  </svg>
</div>
<svg style="position:absolute;left:1700px;top:210px;z-index:20" width="30" height="36" viewBox="1700 210 30 36">
<path d="M1705.4 214.3 L1705.6 237.3 L1710.5 233.1 L1714.3 240.2 L1718.5 238.4 L1715.6 232.5 L1722.7 232.2 Z" fill="#fff" stroke="#1a1a24" stroke-width="1.1" stroke-linejoin="miter"/>
</svg>
</body></html>
